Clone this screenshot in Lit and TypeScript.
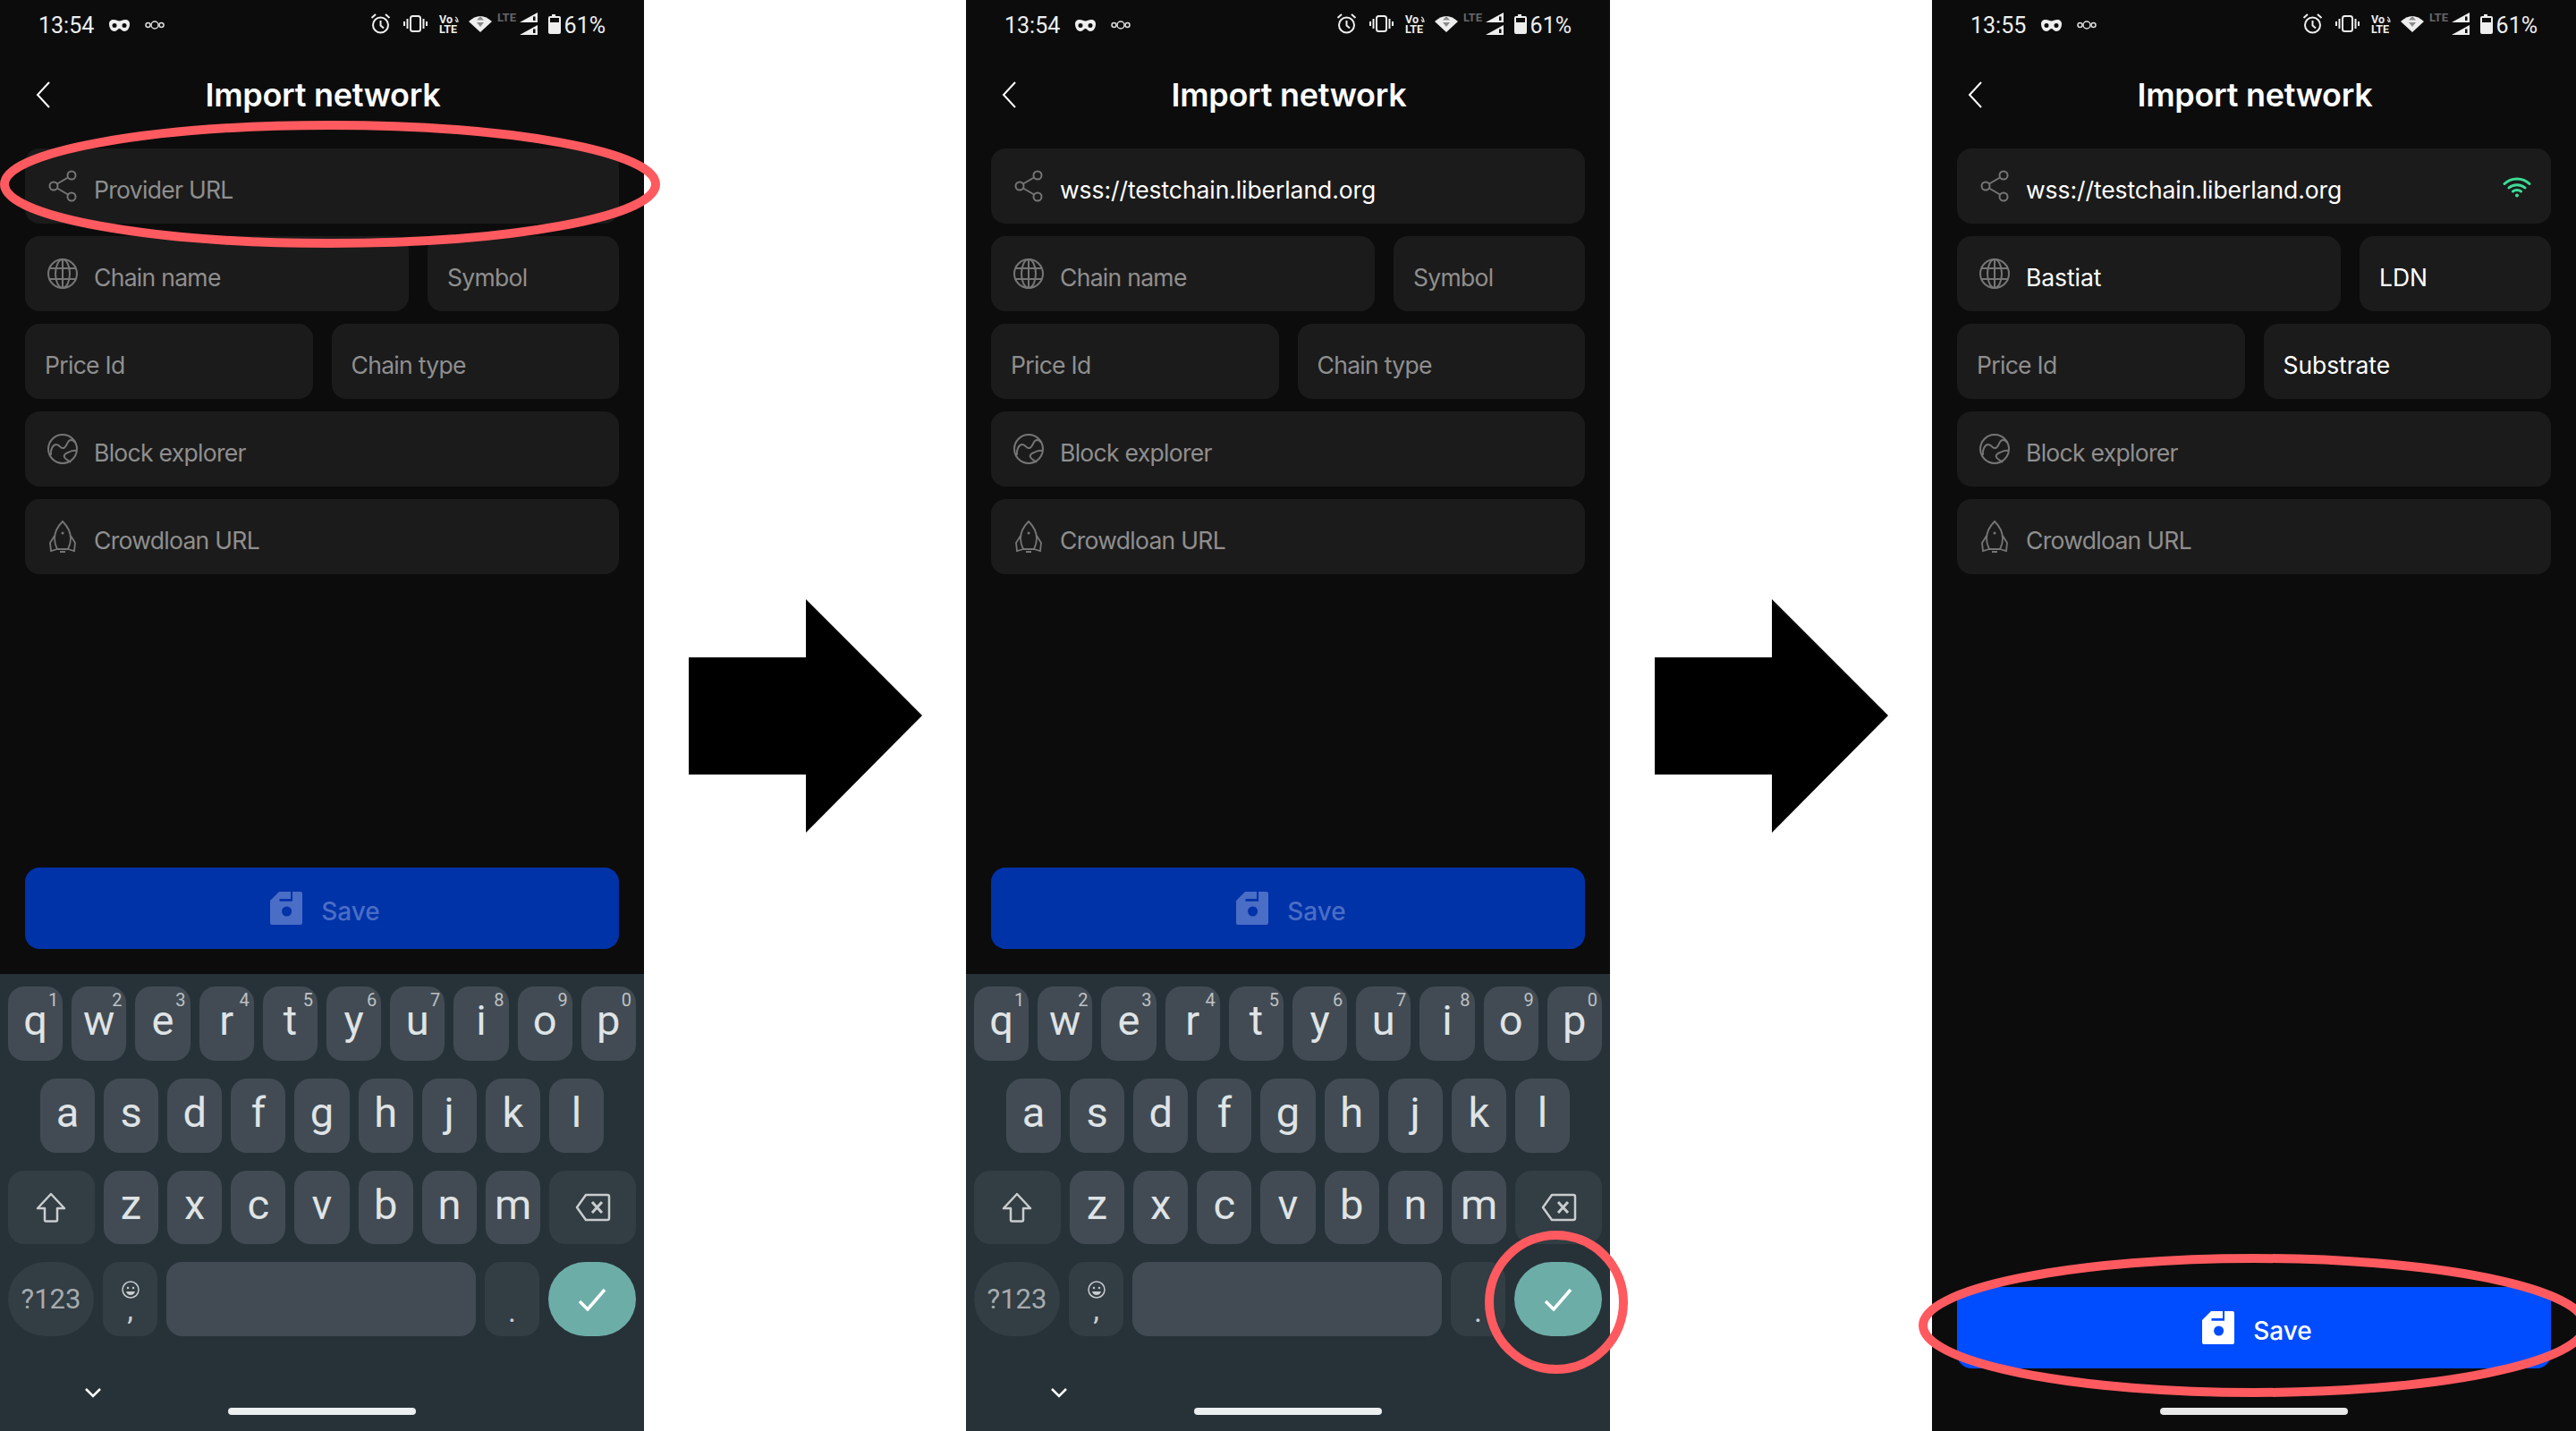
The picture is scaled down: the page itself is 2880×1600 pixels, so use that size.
import { LitElement, html, css, svg } from 'lit';
import { customElement } from 'lit/decorators.js';

const shareIcon = html`<svg class="icon" width="34" height="36" viewBox="0 0 30 36" fill="none" stroke="#767676" stroke-width="2">
  <circle cx="25" cy="6" r="4.5"></circle><circle cx="5" cy="18" r="4.5"></circle><circle cx="25" cy="30" r="4.5"></circle>
  <path d="M21 8.5 9 15.5M9 20.5l12 7"></path></svg>`;

const globeIcon = html`<svg class="icon" width="34" height="36" viewBox="0 0 34 34" fill="none" stroke="#767676" stroke-width="2">
  <circle cx="17" cy="17" r="16"></circle><ellipse cx="17" cy="17" rx="8" ry="16"></ellipse>
  <path d="M17 1v32M2 11h30M2 23h30"></path></svg>`;

const explorerIcon = html`<svg class="icon" width="34" height="36" viewBox="0 0 34 34" fill="none" stroke="#767676" stroke-width="2">
  <circle cx="17" cy="17" r="16"></circle>
  <path d="M4 24c-1-6 2-12 6-12 4 0 4 5 8 4 4-1 4-9 8-9 2 0 4 1 5 3"></path>
  <path d="M33 19c-4-1-7 0-10 2-3 1-5 3-4 5 1 3 4 3 7 6"></path></svg>`;

const rocketIcon = html`<svg class="icon" width="34" height="36" viewBox="0 0 30 36" fill="none" stroke="#767676" stroke-width="1.8">
  <path d="M15 1C9 7 6 13 6 20c0 4 1 8 3 12h12c2-4 3-8 3-12 0-7-3-13-9-19Z"></path>
  <path d="M6 17 1 25l1 9 7-2M24 17l5 8-1 9-7-2M12 35h6"></path>
  <circle cx="15" cy="14" r="1.5" fill="#767676" stroke="none"></circle></svg>`;

const saveIcon = html`<svg class="save-icon" width="36" height="37" viewBox="0 0 36 37">
  <path fill="currentColor" fill-rule="evenodd" d="M10 0H23V8H10.500V10.700H25V0H34a2 2 0 0 1 2 2V35a2 2 0 0 1-2 2H2a2 2 0 0 1-2-2V10ZM18.600 16.500a5.500 5.500 0 1 0 0 11 5.500 5.500 0 0 0 0-11Z"></path></svg>`;

const wifiIcon = html`<svg class="wifi" width="32" height="24" viewBox="0 0 32 24" fill="none" stroke="#3ddc97" stroke-width="3" stroke-linecap="round">
  <path d="M2 8.500C9.500 1 22.500 1 30 8.500M7 13c5-4.500 13-4.500 18 0M11.500 17c2.500-2 6.500-2 9 0"></path>
  <circle cx="16" cy="21.500" r="2" fill="#3ddc97" stroke="none"></circle></svg>`;

const statusIcons = html`<svg class="status-icons" width="214" height="30" viewBox="0 0 214 30">
  <g fill="none" stroke="#eee" stroke-width="2">
    <circle cx="11.500" cy="15" r="8.500"></circle>
    <path d="M11.500 10v5.500l3.500 3M1.500 7 6 3M21.500 7 17 3"></path>
    <rect x="45" y="5" width="11" height="17" rx="2.500"></rect>
    <path d="M41.500 8v11M38 11v5M59.500 8v11M63 11v5"></path>
    <path stroke-width="1.200" d="M95 6c2 1 3 3 3 6M95 9c1 .5 1.500 1.500 1.500 3"></path>
  </g>
  <text class="st" x="77" y="13">Vo</text>
  <text class="st" x="77" y="24">LTE</text>
  <path fill="#eee" d="M110 11Q123-1 136 11L123 23Z"></path>
  <path fill="#8a8a8a" d="M123 5l4 4.500h-8ZM119 12h8l-4 5Z"></path>
  <text class="st lte" x="142" y="11">LTE</text>
  <path fill="#eee" d="M167 12 187 1V12ZM167 26 187 15V26Z"></path>
  <path fill="#0c0c0c" d="M182 5.500h2.500V10H182ZM182 19.500h2.500V24H182Z"></path>
  <path fill="#eee" fill-rule="evenodd" d="M203 3h4v2h4a2 2 0 0 1 2 2v16a2 2 0 0 1-2 2h-10a2 2 0 0 1-2-2V7a2 2 0 0 1 2-2h2ZM201 7v5h10V7Z"></path>
</svg>`;

const shiftIcon = html`<svg width="34" height="34" viewBox="0 0 34 34" fill="none" stroke="#c9cdcf" stroke-width="2.500" stroke-linejoin="round">
  <path d="M17 2 2 18h8v13a1.500 1.500 0 0 0 1.500 1.500h11A1.500 1.500 0 0 0 24 31V18h8Z"></path></svg>`;

const backIcon = html`<svg width="40" height="32" viewBox="0 0 40 32" fill="none" stroke="#c9cdcf" stroke-width="2.500" stroke-linejoin="round">
  <path d="M12 2h24a2 2 0 0 1 2 2v24a2 2 0 0 1-2 2H12L2 16Z"></path>
  <path stroke-width="3" d="M19 10l11 12M30 10 19 22"></path></svg>`;

const smileIcon = html`<svg class="smile" width="20" height="20" viewBox="0 0 20 20" fill="none" stroke="#c9cdcf" stroke-width="1.500">
  <circle cx="10" cy="10" r="9"></circle><circle cx="7" cy="8" r="1.200" fill="#c9cdcf" stroke="none"></circle>
  <circle cx="13" cy="8" r="1.200" fill="#c9cdcf" stroke="none"></circle>
  <path fill="#c9cdcf" stroke="none" d="M5 12h10c-1 3-3 4-5 4s-4-1-5-4Z"></path></svg>`;

const rowOne = [['q', '1'], ['w', '2'], ['e', '3'], ['r', '4'], ['t', '5'], ['y', '6'], ['u', '7'], ['i', '8'], ['o', '9'], ['p', '0']];

interface Field {
  label: string;
  icon?: unknown;
  filled?: boolean;
  end?: unknown;
}

@customElement('phone-screen')
class PhoneScreen extends LitElement {
  static properties = {
    time: {},
    step: { type: Number },
  };

  declare time: string;
  declare step: number;

  static styles = css`
    :host {
      display: flex;
      flex-direction: column;
      flex: none;
      width: 720px;
      height: 1600px;
      background: #0c0c0c;
      color: #fff;
      font-family: Inter, 'Noto Sans', sans-serif;
    }

    .status {
      display: flex;
      align-items: center;
      height: 56px;
      padding: 0 43px;
      font: 400 25px Roboto, sans-serif;
      color: #eee;
      flex: none;
    }

    .status-icons {
      margin-left: auto;
      margin-right: 3px;
    }

    .status .mask {
      margin-left: 17px;
    }

    .status .rings {
      margin-left: 17px;
    }

    .st {
      font: 700 12.500px Roboto, sans-serif;
      fill: #eee;
    }

    .st.lte {
      fill: #666;
      font-size: 13px;
    }

    .header {
      display: grid;
      grid-template-columns: 1fr auto 1fr;
      align-items: center;
      height: 100px;
      padding: 0 40px;
      flex: none;
    }

    .title {
      margin-left: 2px;
      font-size: 36px;
      font-weight: 600;
      letter-spacing: -0.3px;
    }

    .form {
      display: flex;
      flex-direction: column;
      gap: 14px;
      padding: 10px 28px 0;
    }

    .row {
      display: flex;
      gap: 21px;
    }

    .field {
      display: flex;
      align-items: center;
      flex: none;
      height: 84px;
      padding: 0 22px;
      box-sizing: border-box;
      background: #1b1b1b;
      border-radius: 16px;
      font-size: 26.500px;
      letter-spacing: -0.7px;
      color: #8f8f8f;
    }

    .row .field {
      flex: 1 1 0;
      min-width: 0;
    }

    .field.filled {
      color: #fff;
      letter-spacing: -0.08px;
    }

    .row .field.wide {
      flex: 0 0 429px;
    }

    .field span {
      padding-top: 8px;
    }

    .field .icon {
      flex: none;
      margin: 0 18px 0 3px;
    }

    .field .wifi {
      margin: 2px 0 0 auto;
    }

    .spacer {
      flex: 1;
    }

    .save {
      display: flex;
      align-items: center;
      justify-content: center;
      gap: 21px;
      height: 91px;
      margin: 0 28px 28px;
      padding-left: 7px;
      background: #0032a8;
      border-radius: 16px;
      color: #4a6dc5;
      font-size: 28px;
      font-weight: 500;
      flex: none;
    }

    .save span {
      padding-top: 7px;
    }

    .save.on {
      background: #004cff;
      color: #fff;
      margin-bottom: 33px;
    }

    .keyboard {
      display: flex;
      flex-direction: column;
      height: 511px;
      padding-top: 14px;
      box-sizing: border-box;
      background: #263238;
      flex: none;
    }

    .keys {
      display: flex;
      gap: 10px;
      height: 83px;
      margin-bottom: 20px;
      padding: 0 9px;
    }

    .keys.home {
      padding: 0 45px;
    }

    .key {
      position: relative;
      display: flex;
      align-items: center;
      justify-content: center;
      flex: 0 0 61.200px;
      padding-bottom: 7px;
      box-sizing: border-box;
      background: #424b53;
      border-radius: 18px;
      font: 400 47px Roboto, sans-serif;
      color: #dfe3e5;
    }

    .key.home {
      flex: 1;
    }

    .key sup {
      position: absolute;
      top: 3px;
      right: 5px;
      font-size: 20px;
      line-height: 24px;
      color: #bdc1c4;
    }

    .key.fn {
      background: #323d44;
      flex: 1;
      padding-bottom: 0;
    }

    .key.round {
      flex: 0 0 96px;
      border-radius: 42px;
      font-size: 31px;
      color: #a6abae;
    }

    .key.space {
      flex: 1;
    }

    .key.small {
      flex: 0 0 61.200px;
      background: #323d44;
      flex-direction: column;
      font-size: 34px;
      line-height: 24px;
      color: #c9cdcf;
      padding-bottom: 0;
    }

    .key.small .smile {
      margin-top: 2px;
    }

    .key.period {
      justify-content: flex-end;
      padding-bottom: 16px;
    }

    .key.enter {
      flex: 0 0 98px;
      background: #6dada7;
      border-radius: 42px;
      padding-bottom: 0;
    }

    .chev {
      margin: 38px 0 0 95px;
      flex: none;
    }

    .handle {
      align-self: center;
      flex: none;
      width: 210px;
      height: 8px;
      margin: 11px 0 18px;
      background: #eceff0;
      border-radius: 4px;
    }

    .handle.dark {
      background: #e9e9e9;
    }
  `;

  private field(f: Field, wide = false) {
    return html`<div class="field ${f.filled ? 'filled' : ''} ${wide ? 'wide' : ''}">
      ${f.icon ?? ''}<span>${f.label}</span>${f.end ?? ''}
    </div>`;
  }

  private keyboard() {
    return html`<div class="keyboard">
      <div class="keys">
        ${rowOne.map(([k, n]) => html`<div class="key">${k}<sup>${n}</sup></div>`)}
      </div>
      <div class="keys home">
        ${[...'asdfghjkl'].map((k) => html`<div class="key home">${k}</div>`)}
      </div>
      <div class="keys">
        <div class="key fn">${shiftIcon}</div>
        ${[...'zxcvbnm'].map((k) => html`<div class="key">${k}</div>`)}
        <div class="key fn">${backIcon}</div>
      </div>
      <div class="keys">
        <div class="key fn round">?123</div>
        <div class="key small">${smileIcon}<span>,</span></div>
        <div class="key space"></div>
        <div class="key small period">.</div>
        <div class="key enter">
          <svg width="32" height="26" viewBox="0 0 32 26" fill="none" stroke="#fff" stroke-width="3.500"><path d="M2 15l9 9L30 2"></path></svg>
        </div>
      </div>
      <svg class="chev" width="18" height="11" viewBox="0 0 18 11" fill="none" stroke="#fff" stroke-width="2.500"><path d="M1 1l8 8 8-8"></path></svg>
      <div class="handle"></div>
    </div>`;
  }

  render() {
    const done = this.step === 3;
    const url = this.step > 1;
    return html`
      <div class="status">
        <span>${this.time}</span>
        <svg class="mask" width="23" height="13" viewBox="0 0 23 13"><path fill="#eee" fill-rule="evenodd" d="M5 0c3 0 4.500 1.500 6.500 1.500S15 0 18 0c3 0 5 1.500 5 5s-2 8-6 8c-3 0-3.500-3-5.500-3S9 13 6 13C2 13 0 8.500 0 5s2-5 5-5ZM6 4a2.500 2.500 0 1 0 0 5 2.500 2.500 0 0 0 0-5ZM17 4a2.500 2.500 0 1 0 0 5 2.500 2.500 0 0 0 0-5Z"></path></svg>
        <svg class="rings" width="22" height="12" viewBox="0 0 22 12" fill="none" stroke="#ddd" stroke-width="1.500"><circle cx="3.500" cy="6" r="2.500"></circle><circle cx="11" cy="6" r="4"></circle><circle cx="18.500" cy="6" r="2.500"></circle></svg>
        ${statusIcons}
        <span>61%</span>
      </div>
      <div class="header">
        <svg width="16" height="30" viewBox="0 0 16 30" fill="none" stroke="#fff" stroke-width="2"><path d="M15 1 2 15l13 14"></path></svg>
        <div class="title">Import network</div>
      </div>
      <div class="form">
        ${this.field({ label: url ? 'wss://testchain.liberland.org' : 'Provider URL', icon: shareIcon, filled: url, end: done ? wifiIcon : '' })}
        <div class="row">
          ${this.field({ label: done ? 'Bastiat' : 'Chain name', icon: globeIcon, filled: done }, true)}
          ${this.field({ label: done ? 'LDN' : 'Symbol', filled: done })}
        </div>
        <div class="row">
          ${this.field({ label: 'Price Id' })}
          ${this.field({ label: done ? 'Substrate' : 'Chain type', filled: done })}
        </div>
        ${this.field({ label: 'Block explorer', icon: explorerIcon })}
        ${this.field({ label: 'Crowdloan URL', icon: rocketIcon })}
      </div>
      <div class="spacer"></div>
      <div class="save ${done ? 'on' : ''}">${saveIcon}<span>Save</span></div>
      ${done ? html`<div class="handle dark"></div>` : this.keyboard()}
    `;
  }
}

@customElement('app-root')
export class AppRoot extends LitElement {
  static styles = css`
    :host {
      display: block;
      position: relative;
      width: 2880px;
      height: 1600px;
      overflow: hidden;
      background: #fff;
    }

    .page {
      display: flex;
      height: 100%;
    }

    .gap {
      display: flex;
      align-items: center;
      justify-content: center;
      flex: none;
      width: 360px;
    }

    .marks {
      position: absolute;
      inset: 0;
      pointer-events: none;
    }
  `;

  private arrow() {
    return html`<div class="gap">
      <svg width="261" height="261" viewBox="0 0 261 261"><path d="M0 65H131V0L261 130 131 261V196H0Z"></path></svg>
    </div>`;
  }

  render() {
    return html`
      <div class="page">
        <phone-screen time="13:54" step="1"></phone-screen>
        ${this.arrow()}
        <phone-screen time="13:54" step="2"></phone-screen>
        ${this.arrow()}
        <phone-screen time="13:55" step="3"></phone-screen>
      </div>
      <svg class="marks" width="2880" height="1600" fill="none" stroke="#ff5a5f" stroke-width="10">
        ${svg`<ellipse cx="369" cy="206" rx="364" ry="66"></ellipse>
          <circle cx="1740" cy="1456" r="75"></circle>
          <ellipse cx="2520" cy="1482" rx="370" ry="75"></ellipse>`}
      </svg>
    `;
  }
}
